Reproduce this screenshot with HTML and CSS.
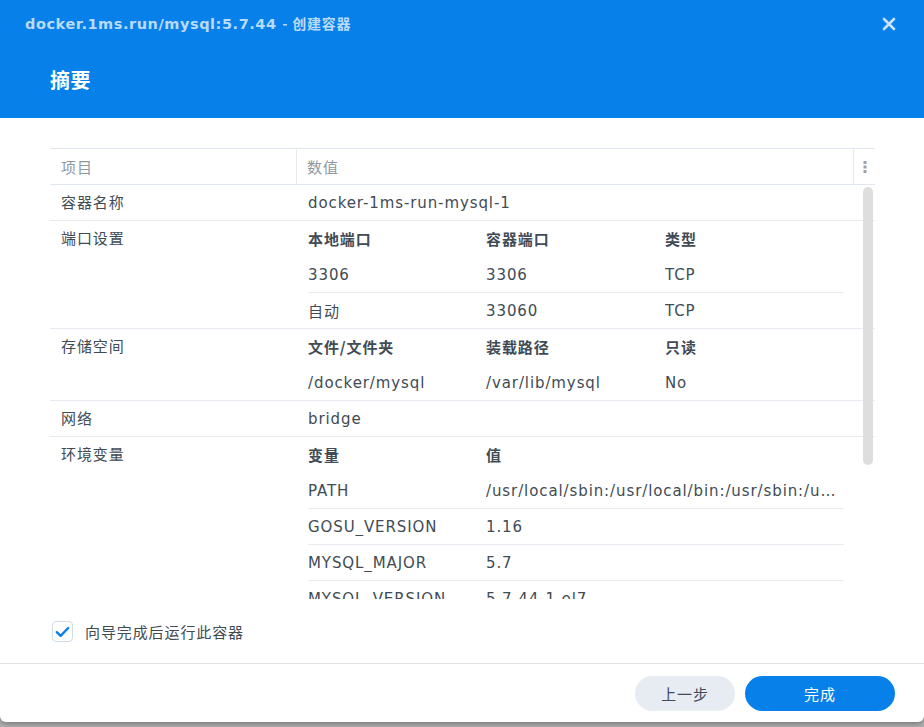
FILE: index.html
```html
<!DOCTYPE html>
<html lang="zh-CN">
<head>
<meta charset="utf-8">
<title>创建容器</title>
<link rel="stylesheet" href="styles.css">
</head>
<body>
<div class="dialog">
  <header class="head">
    <div class="titlebar">
      <span class="title">docker.1ms.run/mysql:5.7.44 <span class="title-sub">- 创建容器</span></span>
      <span class="close" aria-label="关闭">
        <svg width="14" height="14" viewBox="0 0 14 14"><path d="M2 2L12 12M12 2L2 12" stroke="currentColor" stroke-width="2.6" stroke-linecap="round"/></svg>
      </span>
    </div>
    <h1 class="heading">摘要</h1>
  </header>

  <main class="content">
    <div class="grid">
      <div class="thead">
        <div class="th th-key">项目</div>
        <div class="th th-val">数值</div>
        <div class="th th-menu">
          <svg width="4" height="14" viewBox="0 0 4 14"><rect x="0.5" y="1" width="3" height="3" fill="#9aa3ad"/><rect x="0.5" y="5.5" width="3" height="3" fill="#9aa3ad"/><rect x="0.5" y="10" width="3" height="3" fill="#9aa3ad"/></svg>
        </div>
      </div>
      <div class="scroll">
        <div class="row">
          <div class="key">容器名称</div>
          <div class="val">docker-1ms-run-mysql-1</div>
        </div>
        <div class="row">
          <div class="key">端口设置</div>
          <div class="val sub">
            <div class="sub-row sub-head"><span>本地端口</span><span>容器端口</span><span>类型</span></div>
            <div class="sub-row"><span>3306</span><span>3306</span><span>TCP</span></div>
            <div class="sub-row"><span>自动</span><span>33060</span><span>TCP</span></div>
          </div>
        </div>
        <div class="row">
          <div class="key">存储空间</div>
          <div class="val sub">
            <div class="sub-row sub-head"><span>文件/文件夹</span><span>装载路径</span><span>只读</span></div>
            <div class="sub-row"><span>/docker/mysql</span><span>/var/lib/mysql</span><span>No</span></div>
          </div>
        </div>
        <div class="row">
          <div class="key">网络</div>
          <div class="val">bridge</div>
        </div>
        <div class="row">
          <div class="key">环境变量</div>
          <div class="val sub">
            <div class="sub-row env sub-head"><span>变量</span><span>值</span></div>
            <div class="sub-row env"><span>PATH</span><span class="ell">/usr/local/sbin:/usr/local/bin:/usr/sbin:/usr/bin:/sbin:/bin</span></div>
            <div class="sub-row env"><span>GOSU_VERSION</span><span>1.16</span></div>
            <div class="sub-row env"><span>MYSQL_MAJOR</span><span>5.7</span></div>
            <div class="sub-row env"><span>MYSQL_VERSION</span><span>5.7.44-1.el7</span></div>
          </div>
        </div>
      </div>
      <div class="scrollbar"></div>
    </div>

    <label class="check">
      <span class="box">
        <svg width="15" height="12" viewBox="0 0 15 12"><path d="M1.8 6.2L5.6 9.8L13.2 2" fill="none" stroke="#0780ea" stroke-width="2.4" stroke-linecap="round" stroke-linejoin="round"/></svg>
      </span>
      <span class="check-label">向导完成后运行此容器</span>
    </label>
  </main>

  <footer class="foot">
    <button class="btn btn-back">上一步</button>
    <button class="btn btn-done">完成</button>
  </footer>
</div>
</body>
</html>
```

FILE: styles.css
```css
* { box-sizing: border-box; }

html, body {
  margin: 0;
  padding: 0;
  height: 100%;
}

body {
  background: #b3b3b3;
  font-family: "DejaVu Sans", "Noto Sans CJK SC", sans-serif;
  color: #414b55;
  overflow: hidden;
}

.dialog {
  width: 924px;
  height: 722px;
  background: #fff;
  border-radius: 0 0 6px 6px;
  box-shadow: 0 2px 6px rgba(0, 0, 0, 0.35);
  display: flex;
  flex-direction: column;
  overflow: hidden;
}

.head {
  height: 118px;
  background: #0780ea;
  flex: none;
}

.titlebar {
  height: 46px;
  display: flex;
  align-items: center;
  justify-content: space-between;
  padding: 0 28px 0 25px;
}

.title {
  font-family: "DejaVu Sans", "Noto Sans CJK SC", sans-serif;
  font-weight: 700;
  font-size: 14.5px;
  letter-spacing: 0.55px;
  color: rgba(255, 255, 255, 0.72);
}

.title-sub {
  font-size: 14px;
  letter-spacing: 0.8px;
  font-family: "Noto Sans CJK SC", sans-serif;
}

.close {
  color: rgba(255, 255, 255, 0.78);
  display: flex;
  margin-top: 1px;
}

.heading {
  margin: 0;
  padding: 22px 0 0 50px;
  font-size: 20px;
  font-weight: 700;
  color: #fff;
  line-height: 24px;
  letter-spacing: 0.5px;
  font-family: "Noto Sans CJK SC", sans-serif;
}

.content {
  flex: 1;
  display: flex;
  flex-direction: column;
  padding: 30px 49px 0 50px;
}

.grid {
  position: relative;
  border-top: 1px solid #dfe6ee;
}

.thead {
  display: flex;
  height: 36px;
  border-bottom: 1px solid #dfe6ee;
  font-size: 15px;
  letter-spacing: 0.9px;
  color: #8e98a3;
}

.th {
  display: flex;
  align-items: center;
}

.th-key {
  width: 247px;
  padding-left: 11px;
  border-right: 1px solid #e3e9ef;
}

.th-val {
  flex: 1;
  padding-left: 10px;
  border-right: 1px solid #e3e9ef;
}

.th-menu {
  width: 21px;
  justify-content: center;
}

.scroll {
  height: 414px;
  overflow: hidden;
}

.row {
  display: flex;
  border-bottom: 1px solid #e5ebf1;
  font-size: 15px;
  letter-spacing: 0.9px;
}

.key {
  width: 247px;
  padding: 2px 0 0 11px;
  line-height: 33px;
}

.val {
  flex: 1;
  padding: 2px 0 0 11px;
  line-height: 33px;
}

.val.sub {
  padding: 0 31px 0 11px;
  line-height: normal;
}

.sub-row {
  display: grid;
  grid-template-columns: 178px 179px 1fr;
  height: 36px;
  align-items: center;
  border-bottom: 1px solid #e5ebf1;
}

.sub-row.env {
  grid-template-columns: 178px 1fr;
}

.sub-row.sub-head {
  border-bottom: none;
  font-weight: 700;
  font-family: "Noto Sans CJK SC", sans-serif;
  padding-bottom: 2px;
}

.sub-row:last-child {
  border-bottom: none;
  height: 35px;
}

.sub-row span {
  white-space: nowrap;
  overflow: hidden;
}

.ell {
  text-overflow: ellipsis;
}

.scrollbar {
  position: absolute;
  right: 2px;
  top: 38px;
  width: 10px;
  height: 278px;
  border-radius: 5px;
  background: #dedede;
}

.check {
  display: flex;
  align-items: center;
  margin-top: 22px;
  padding-left: 2px;
  font-size: 15px;
  letter-spacing: 0.9px;
}

.box {
  width: 21px;
  height: 21px;
  border: 1px solid #cfdbe7;
  border-radius: 4px;
  display: flex;
  align-items: center;
  justify-content: center;
  margin-right: 12px;
}

.check-label {
  font-family: "Noto Sans CJK SC", sans-serif;
}

.foot {
  height: 59px;
  flex: none;
  border-top: 1px solid #e2e2e2;
  display: flex;
  justify-content: flex-end;
  gap: 10px;
  padding: 12px 29px 0 0;
}

.btn {
  height: 35px;
  border: none;
  border-radius: 18px;
  font-size: 15px;
  letter-spacing: 0.9px;
  font-family: "Noto Sans CJK SC", sans-serif;
  cursor: pointer;
}

.btn-back {
  width: 100px;
  background: #e6ecf2;
  color: #414b55;
}

.btn-done {
  width: 150px;
  background: #0780ea;
  color: #fff;
}
```
